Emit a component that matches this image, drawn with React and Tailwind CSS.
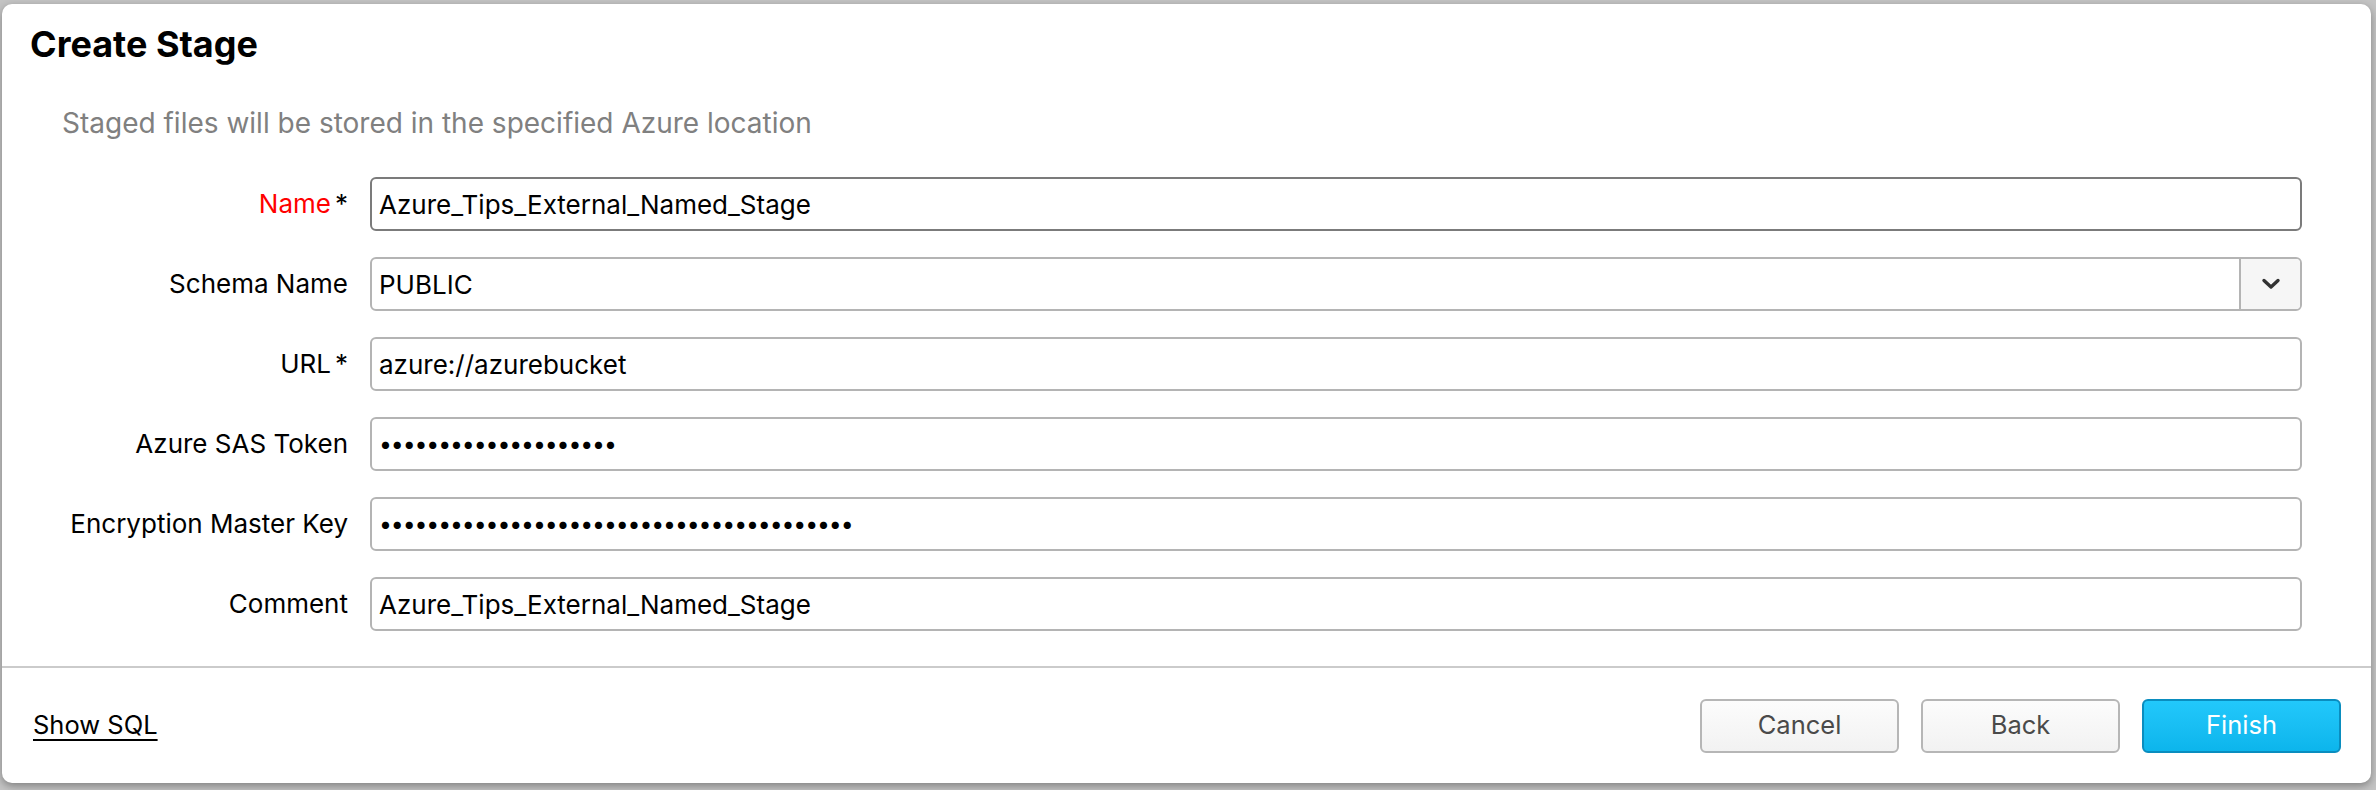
import { useState } from 'react'

const FIELDS = [
  { key: 'name', label: 'Name', required: true, red: true, value: 'Azure_Tips_External_Named_Stage' },
  { key: 'schema', label: 'Schema Name', value: 'PUBLIC', select: true },
  { key: 'url', label: 'URL', required: true, value: 'azure://azurebucket' },
  { key: 'sas', label: 'Azure SAS Token', value: '•'.repeat(20), secret: true },
  { key: 'key', label: 'Encryption Master Key', value: '•'.repeat(40), secret: true },
  { key: 'comment', label: 'Comment', value: 'Azure_Tips_External_Named_Stage' },
]

function Chevron() {
  return (
    <svg width="20" height="12" viewBox="0 0 20 12" fill="none">
      <path d="M3 2.5 L10 9 L17 2.5" stroke="#333" strokeWidth="3.4" strokeLinecap="round" strokeLinejoin="round" />
    </svg>
  )
}

export default function App() {
  const [values, setValues] = useState(Object.fromEntries(FIELDS.map((f) => [f.key, f.value])))

  return (
    <div className="h-[790px] bg-[#c4c4c4] pt-[4px] pl-[2px] pr-[5px] font-['Inter',sans-serif]">
      <div className="h-[779px] bg-white rounded-[10px] shadow-[0_3px_8px_rgba(0,0,0,0.35)] flex flex-col">
        <h1 className="mt-[20px] pl-[28px] text-[36px] leading-[40px] font-bold text-black">Create Stage</h1>
        <p className="mt-[42px] pl-[60px] text-[28px] leading-[34px] text-[#808080]">
          Staged files will be stored in the specified Azure location
        </p>

        <div className="mt-[37px] pr-[69px] flex flex-col gap-[26px]">
          {FIELDS.map((f) => (
            <div key={f.key} className="flex items-center gap-[22px]">
              <label className="w-[346px] text-right text-[26px] leading-[30px] text-black">
                {f.red ? <span className="text-[#ff0000]">{f.label}</span> : f.label}
                {f.required && <span className="ml-[4px]">*</span>}
              </label>
              <div
                className={
                  'flex-1 h-[54px] flex rounded-[6px] border-2 bg-white overflow-hidden ' +
                  (f.key === 'name' ? 'border-[#7b7b7b]' : 'border-[#b4b4b4]')
                }
              >
                <input
                  value={values[f.key]}
                  onChange={(e) => setValues({ ...values, [f.key]: e.target.value })}
                  className={
                    'flex-1 min-w-0 px-[7px] outline-none text-black ' +
                    (f.secret ? 'text-[23px] tracking-[-1.1px]' : 'text-[26px]')
                  }
                />
                {f.select && (
                  <div className="w-[61px] flex items-center justify-center border-l-2 border-[#b4b4b4] bg-[#f6f6f6]">
                    <Chevron />
                  </div>
                )}
              </div>
            </div>
          ))}
        </div>

        <div className="mt-[35px] h-[2px] bg-[#cbcbcb]" />

        <div className="flex-1 flex items-center justify-between pl-[31px] pr-[30px]">
          <button className="text-[25.5px] text-black underline underline-offset-[5px] decoration-[2px]">Show SQL</button>
          <div className="flex gap-[22px]">
            <button className="w-[199px] h-[54px] rounded-[6px] border-2 border-[#b6b6b6] bg-gradient-to-b from-[#fcfcfc] to-[#f2f2f2] text-[25.5px] text-[#4a4a4a]">
              Cancel
            </button>
            <button className="w-[199px] h-[54px] rounded-[6px] border-2 border-[#b6b6b6] bg-gradient-to-b from-[#fcfcfc] to-[#f2f2f2] text-[25.5px] text-[#4a4a4a]">
              Back
            </button>
            <button className="w-[199px] h-[54px] rounded-[6px] border-2 border-[#0a8dbf] bg-gradient-to-b from-[#22c8fb] to-[#0cb5ec] text-[25.5px] text-white">
              Finish
            </button>
          </div>
        </div>
      </div>
    </div>
  )
}
